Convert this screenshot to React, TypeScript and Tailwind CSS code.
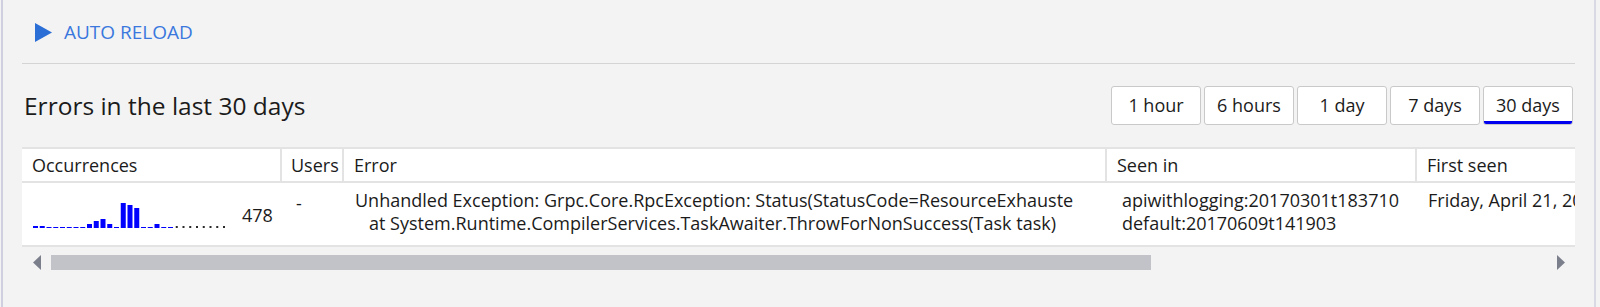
import React from 'react'

const ranges = [
  { label: '1 hour' },
  { label: '6 hours' },
  { label: '1 day' },
  { label: '7 days' },
  { label: '30 days', active: true },
]

// daily error counts, drawn as pixel heights
const days = [2, 2, 1, 1, 1, 1, 1, 1, 4, 7, 9, 4, 1, 25, 23, 20, 1, 1, 4, 1, 1, 0, 0, 0, 0, 0, 0, 0, 0]

function Sparkline() {
  return (
    <svg width="200" height="30" viewBox="0 0 200 30" className="shrink-0">
      {days.map((h, i) => {
        const x = i * 6.75
        if (h === 0) return <rect key={i} x={x + 1} y={28} width={2} height={2} fill="#2a2a2a" />
        return <rect key={i} x={x} y={30 - h} width={5} height={h} fill="#0000ff" />
      })}
    </svg>
  )
}

export default function App() {
  return (
    <div className="w-[1600px] h-[307px] bg-[#f3f3f3] flex overflow-hidden font-['Open_Sans',sans-serif] text-[#1b1b1b]">
      <div className="w-[2px] ml-[1px] bg-[#cfcfe0] shrink-0" />

      <div className="flex-1 pl-[19px] pr-[19px] flex flex-col min-w-0">
        {/* Auto reload */}
        <div className="h-[63px] flex items-center pl-[13px] gap-[12px] text-[#3a78de] text-[19px] pt-[2px]">
          <svg width="17" height="19" viewBox="0 0 17 19">
            <polygon points="0,0 17,9.5 0,19" fill="#2b6fd6" />
          </svg>
          <span>AUTO RELOAD</span>
        </div>
        <div className="h-px bg-[#d4d4d4]" />

        {/* Title + time range */}
        <div className="mt-[22px] h-[39px] flex items-center justify-between">
          <h2 className="text-[24.5px] pl-[2px] pt-[1px]">Errors in the last 30 days</h2>
          <div className="flex gap-[3px] pr-[2px]">
            {ranges.map((r) => (
              <button
                key={r.label}
                className="relative w-[90px] h-[39px] bg-white border border-[#c9c9c9] rounded-[3px] text-[18px] text-[#1b1b1b] overflow-hidden"
              >
                {r.label}
                {r.active && <span className="absolute left-0 right-0 bottom-0 h-[3px] bg-[#0000ee]" />}
              </button>
            ))}
          </div>
        </div>

        {/* Table */}
        <div className="mt-[22px] overflow-hidden">
          <div className="w-[1900px] bg-white border-t-2 border-[#e3e3e3]">
            <div className="flex h-[34px] border-b-2 border-[#e3e3e3] text-[18px]">
              <div className="w-[260px] border-r-2 border-[#e3e3e3] pl-[10px] flex items-center">Occurrences</div>
              <div className="w-[62px] border-r-2 border-[#e3e3e3] pl-[9px] flex items-center">Users</div>
              <div className="w-[763px] border-r-2 border-[#e3e3e3] pl-[10px] flex items-center">Error</div>
              <div className="w-[310px] border-r-2 border-[#e3e3e3] pl-[10px] flex items-center">Seen in</div>
              <div className="w-[300px] border-r-2 border-[#e3e3e3] pl-[10px] flex items-center">First seen</div>
            </div>
            <div className="flex h-[64px] border-b-2 border-[#e3e3e3] text-[18px] leading-[23px]">
              <div className="w-[260px] pl-[11px] pt-[15px] flex items-start">
                <Sparkline />
                <span className="ml-[9px] mt-[6px]">478</span>
              </div>
              <div className="w-[62px] pl-[14px] pt-[9px]">-</div>
              <div className="w-[763px] pl-[11px] pr-[30px] pt-[6px] whitespace-pre">
                <div className="w-[722px] overflow-hidden">Unhandled Exception: Grpc.Core.RpcException: Status(StatusCode=ResourceExhauste</div>
                <div className="w-[722px] overflow-hidden">{'   at System.Runtime.CompilerServices.TaskAwaiter.ThrowForNonSuccess(Task task)'}</div>
              </div>
              <div className="w-[310px] pl-[15px] pt-[6px] whitespace-nowrap">
                <div>apiwithlogging:20170301t183710</div>
                <div>default:20170609t141903</div>
              </div>
              <div className="w-[300px] pl-[11px] pt-[6px] whitespace-nowrap">Friday, April 21, 2017 10:14:32 AM</div>
            </div>
          </div>

          {/* Horizontal scrollbar */}
          <div className="h-[31px] flex items-center pl-[11px] pr-[10px]">
            <svg width="8" height="15" viewBox="0 0 8 15">
              <polygon points="8,0 0,7.5 8,15" fill="#7b7f8c" />
            </svg>
            <div className="ml-[10px] w-[1100px] h-[15px] bg-[#c2c3c8]" />
            <div className="flex-1" />
            <svg width="8" height="15" viewBox="0 0 8 15">
              <polygon points="0,0 8,7.5 0,15" fill="#7b7f8c" />
            </svg>
          </div>
        </div>
      </div>

      <div className="w-[2px] bg-[#d9d9e3] shrink-0 mr-[4px]" />
    </div>
  )
}
